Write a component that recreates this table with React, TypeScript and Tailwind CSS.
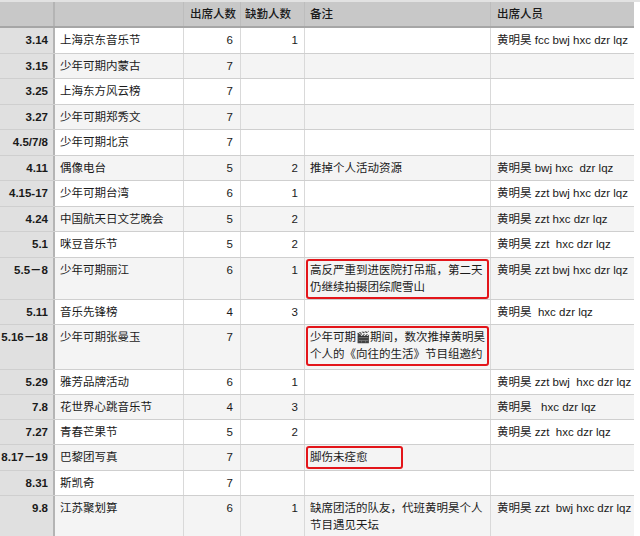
import React from 'react';

type Row = {
  date: string;
  event: string;
  present: string;
  absent?: string;
  note?: string[];
  boxed?: boolean;
  boxWidth?: string;
  members?: string;
  h: string;
};

const rows: Row[] = [
  { date: '3.14', event: '上海京东音乐节', present: '6', absent: '1', members: '黄明昊 fcc bwj hxc dzr lqz', h: 'h-[25.5px]' },
  { date: '3.15', event: '少年可期内蒙古', present: '7', h: 'h-[25.5px]' },
  { date: '3.25', event: '上海东方风云榜', present: '7', h: 'h-[25.5px]' },
  { date: '3.27', event: '少年可期郑秀文', present: '7', h: 'h-[25.5px]' },
  { date: '4.5/7/8', event: '少年可期北京', present: '7', h: 'h-[25.5px]' },
  { date: '4.11', event: '偶像电台', present: '5', absent: '2', note: ['推掉个人活动资源'], members: '黄明昊 bwj hxc  dzr lqz', h: 'h-[25.5px]' },
  { date: '4.15-17', event: '少年可期台湾', present: '6', absent: '1', members: '黄明昊 zzt bwj hxc dzr lqz', h: 'h-[25.5px]' },
  { date: '4.24', event: '中国航天日文艺晚会', present: '5', absent: '2', members: '黄明昊 zzt hxc dzr lqz', h: 'h-[25.5px]' },
  { date: '5.1', event: '咪豆音乐节', present: '5', absent: '2', members: '黄明昊 zzt  hxc dzr lqz', h: 'h-[25.5px]' },
  { date: '5.5－8', event: '少年可期丽江', present: '6', absent: '1', note: ['高反严重到进医院打吊瓶，第二天', '仍继续拍摄团综爬雪山'], boxed: true, members: '黄明昊 zzt bwj hxc dzr lqz', h: 'h-[42px]' },
  { date: '5.11', event: '音乐先锋榜', present: '4', absent: '3', members: '黄明昊  hxc dzr lqz', h: 'h-[25px]' },
  { date: '5.16－18', event: '少年可期张曼玉', present: '7', note: ['少年可期🎬期间，数次推掉黄明昊', '个人的《向往的生活》节目组邀约'], boxed: true, h: 'h-[45px]' },
  { date: '5.29', event: '雅芳品牌活动', present: '6', absent: '1', members: '黄明昊 zzt bwj  hxc dzr lqz', h: 'h-[25.5px]' },
  { date: '7.8', event: '花世界心跳音乐节', present: '4', absent: '3', members: '黄明昊   hxc dzr lqz', h: 'h-[25px]' },
  { date: '7.27', event: '青春芒果节', present: '5', absent: '2', members: '黄明昊 zzt  hxc dzr lqz', h: 'h-[25px]' },
  { date: '8.17－19', event: '巴黎团写真', present: '7', note: ['脚伤未痊愈'], boxed: true, boxWidth: 'w-[97px]', h: 'h-[25.5px]' },
  { date: '8.31', event: '斯凯奇', present: '7', h: 'h-[25px]' },
  { date: '9.8', event: '江苏聚划算', present: '6', absent: '1', note: ['缺席团活的队友，代班黄明昊个人', '节目遇见天坛'], members: '黄明昊 zzt  bwj hxc dzr lqz', h: 'h-[45px]' },
];

const grid = 'grid grid-cols-[55px_129px_57px_64px_186px_143px] w-[634px]';

export default function App() {
  return (
    <div
      className="w-[640px] h-[536px] overflow-hidden bg-white text-[11.5px] text-[#1a1a1a]"
      style={{ fontFamily: '"Liberation Sans", "Noto Sans CJK SC", sans-serif' }}
    >
      <div className="border-t-2 border-[#e2e2e2]">
        {/* header */}
        <div className={`${grid} h-[26px] bg-[#c8c8c8] border-b-2 border-[#a6a6a6] font-medium text-[#1a1a1a]`}>
          <div className="border-r-2 border-[#b4b4b4]" />
          <div className="border-r border-[#bdbdbd]" />
          <div className="border-r border-[#bdbdbd] pl-[6px] pt-[4px] leading-[17px]">出席人数</div>
          <div className="border-r border-[#bdbdbd] pl-[4px] pt-[4px] leading-[17px]">缺勤人数</div>
          <div className="border-r border-[#bdbdbd] pl-[5px] pt-[4px] leading-[17px]">备注</div>
          <div className="pl-[6px] pt-[4px] leading-[17px]">出席人员</div>
        </div>

        {rows.map((r, i) => {
          const striped = i % 2 === 1;
          return (
            <div
              key={r.date}
              className={`${grid} ${r.h} border-b border-[#cfcfcf] leading-[17px] ${striped ? 'bg-[#f4f4f4]' : 'bg-white'}`}
            >
              <div className="border-r-2 border-[#b4b4b4] bg-[#e0e0e0] pr-[5px] pt-[4px] text-right font-bold whitespace-nowrap">
                {r.date}
              </div>
              <div className="border-r border-[#d9d9d9] pl-[5px] pt-[4px]">{r.event}</div>
              <div className="border-r border-[#d9d9d9] pr-[7px] pt-[4px] text-right">{r.present}</div>
              <div className="border-r border-[#d9d9d9] pr-[6px] pt-[4px] text-right">{r.absent}</div>
              <div className="border-r border-[#d9d9d9]">
                {r.note && r.boxed ? (
                  <div
                    className={`mx-[1px] mt-[1px] border-2 border-[#e3151a] rounded-[3px] px-[2px] pt-[1px] pb-[1px] whitespace-nowrap ${r.boxWidth ?? ''}`}
                  >
                    {r.note.map((l) => (
                      <div key={l}>{l}</div>
                    ))}
                  </div>
                ) : r.note ? (
                  <div className="pl-[5px] pt-[4px] whitespace-nowrap">
                    {r.note.map((l) => (
                      <div key={l}>{l}</div>
                    ))}
                  </div>
                ) : null}
              </div>
              <div className="pl-[6px] pt-[4px] whitespace-pre">{r.members}</div>
            </div>
          );
        })}
      </div>
    </div>
  );
}
